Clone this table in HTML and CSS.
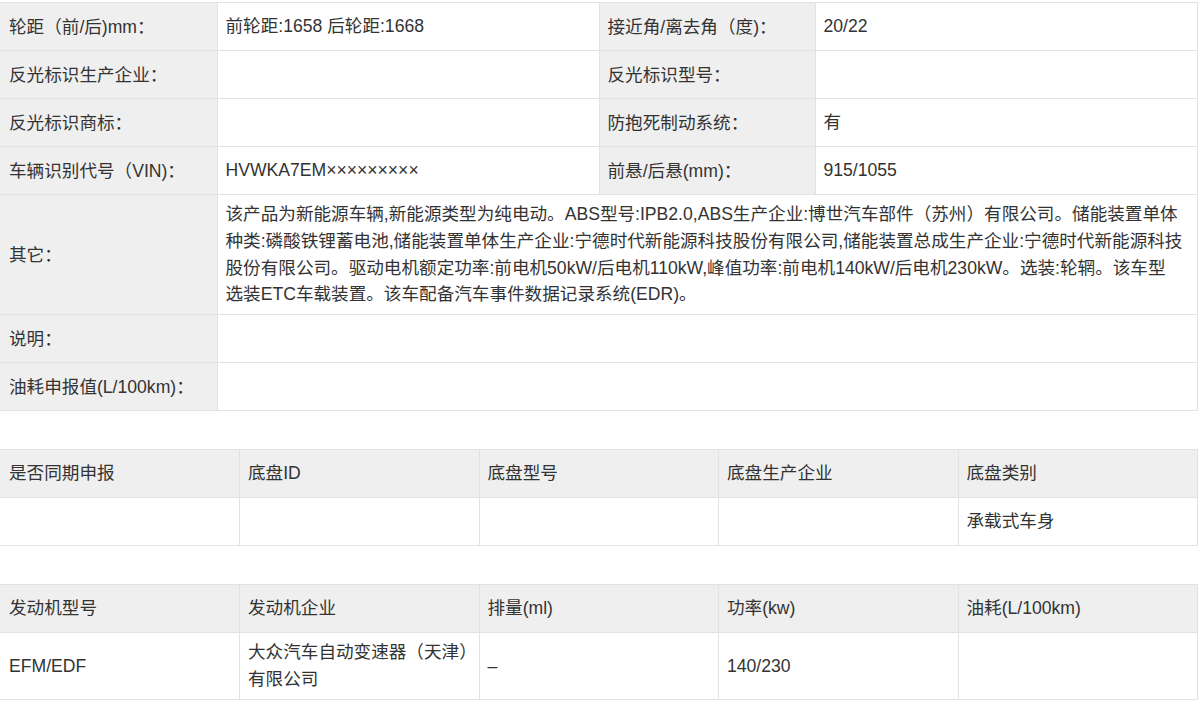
FILE: index.html
```html
<!DOCTYPE html>
<html lang="zh-CN">
<head>
<meta charset="utf-8">
<title>车型参数</title>
<link rel="stylesheet" href="styles.css">
</head>
<body>
<div class="page">
  <table class="spec">
    <colgroup>
      <col class="c-label1"><col class="c-val1"><col class="c-label2"><col>
    </colgroup>
    <tr>
      <td class="lbl">轮距（前/后)mm<span class="colon">：</span></td><td>前轮距:1658 后轮距:1668</td>
      <td class="lbl">接近角/离去角（度)<span class="colon">：</span></td><td>20/22</td>
    </tr>
    <tr>
      <td class="lbl">反光标识生产企业<span class="colon">：</span></td><td></td>
      <td class="lbl">反光标识型号<span class="colon">：</span></td><td></td>
    </tr>
    <tr>
      <td class="lbl">反光标识商标<span class="colon">：</span></td><td></td>
      <td class="lbl">防抱死制动系统<span class="colon">：</span></td><td>有</td>
    </tr>
    <tr>
      <td class="lbl">车辆识别代号（VIN)<span class="colon">：</span></td><td>HVWKA7EM×××××××××</td>
      <td class="lbl">前悬/后悬(mm)<span class="colon">：</span></td><td>915/1055</td>
    </tr>
    <tr>
      <td class="lbl">其它<span class="colon">：</span></td>
      <td colspan="3" class="long">该产品为新能源车辆,新能源类型为纯电动。ABS型号:IPB2.0,ABS生产企业:博世汽车部件（苏州）有限公司。储能装置单体<br>种类:磷酸铁锂蓄电池,储能装置单体生产企业:宁德时代新能源科技股份有限公司,储能装置总成生产企业:宁德时代新能源科技<br>股份有限公司。驱动电机额定功率:前电机50kW/后电机110kW,峰值功率:前电机140kW/后电机230kW。选装:轮辋。该车型<br>选装ETC车载装置。该车配备汽车事件数据记录系统(EDR)。</td>
    </tr>
    <tr>
      <td class="lbl">说明<span class="colon">：</span></td><td colspan="3"></td>
    </tr>
    <tr>
      <td class="lbl">油耗申报值(L/100km)<span class="colon">：</span></td><td colspan="3"></td>
    </tr>
  </table>

  <table class="grid">
    <tr class="head">
      <td>是否同期申报</td><td>底盘ID</td><td>底盘型号</td><td>底盘生产企业</td><td>底盘类别</td>
    </tr>
    <tr>
      <td></td><td></td><td></td><td></td><td>承载式车身</td>
    </tr>
  </table>

  <table class="grid">
    <tr class="head">
      <td>发动机型号</td><td>发动机企业</td><td>排量(ml)</td><td>功率(kw)</td><td>油耗(L/100km)</td>
    </tr>
    <tr>
      <td>EFM/EDF</td><td>大众汽车自动变速器（天津）<br>有限公司</td><td>–</td><td>140/230</td><td></td>
    </tr>
  </table>
</div>
</body>
</html>
```

FILE: styles.css
```css
html, body {
  margin: 0;
  padding: 0;
  background: #ffffff;
}

body {
  font-family: "Liberation Sans", "Noto Sans CJK SC", sans-serif;
  font-size: 17.6px;
  color: #333333;
}

.page {
  padding-top: 2px;
  width: 1198px;
}

table {
  border-collapse: collapse;
  table-layout: fixed;
  width: 1198px;
}

td {
  border: 1px solid #e2e2e2;
  padding: 6px 9px 6px 8px;
  height: 35px;
  line-height: 27px;
  vertical-align: middle;
  white-space: nowrap;
  background: #ffffff;
}

td:first-child {
  border-left: none;
  padding-left: 9px;
}

.c-label1 { width: 217px; }
.c-val1 { width: 382px; }
.c-label2 { width: 216px; }

.lbl {
  background: #efefef;
}

.colon {
  font-family: "Noto Sans CJK TC", "Noto Sans CJK SC", sans-serif;
}

.long {
  line-height: 26.75px;
}

.grid {
  margin-top: 38px;
}

.grid .head td {
  background: #efefef;
}
```
